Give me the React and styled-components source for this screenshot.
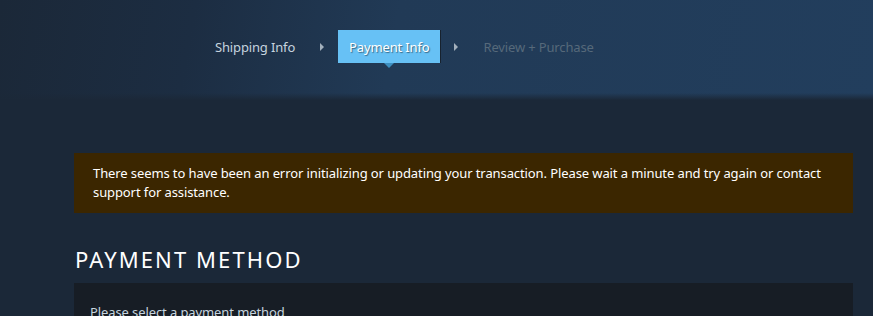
import React from "react";
import styled, { createGlobalStyle } from "styled-components";

const GlobalStyle = createGlobalStyle`
  html, body {
    margin: 0;
    padding: 0;
    background: #1b2838;
    font-family: "Noto Sans", "Open Sans", Arial, sans-serif;
    overflow: hidden;
  }
`;

const steps = [
  { label: "Shipping Info", state: "done" },
  { label: "Payment Info", state: "active" },
  { label: "Review + Purchase", state: "todo" },
];

export default function App() {
  return (
    <>
      <GlobalStyle />
      <Page>
        <Header>
          <StepBar>
            {steps.map((step, i) => (
              <React.Fragment key={step.label}>
                {i > 0 && <StepArrow />}
                <Step $state={step.state}>{step.label}</Step>
              </React.Fragment>
            ))}
          </StepBar>
        </Header>
        <Content>
          <ErrorBox>
            There seems to have been an error initializing or updating your
            transaction. Please wait a minute and try again or contact support
            for assistance.
          </ErrorBox>
          <SectionTitle>Payment Method</SectionTitle>
          <Panel>
            <PanelText>Please select a payment method</PanelText>
          </Panel>
        </Content>
      </Page>
    </>
  );
}

const Page = styled.div`
  width: 873px;
  height: 316px;
  background: #1b2838;
  overflow: hidden;
`;

const Header = styled.div`
  height: 100px;
  background:
    linear-gradient(to bottom, rgba(27, 40, 56, 0) 93%, #1b2838 100%),
    linear-gradient(100deg, #1b2838 0%, #1c2d42 22%, #213a56 45%, #223e5d 100%);
  padding-top: 30px;
  box-sizing: border-box;
`;

const StepBar = styled.div`
  display: flex;
  align-items: center;
  height: 33px;
  padding-left: 215px;
`;

const StepArrow = styled.span`
  width: 0;
  height: 0;
  margin: 0 25px;
  border-top: 4px solid transparent;
  border-bottom: 4px solid transparent;
  border-left: 4px solid #a3b0bc;
`;

const Step = styled.div`
  position: relative;
  display: flex;
  align-items: center;
  height: 33px;
  font-size: 13px;
  letter-spacing: -0.15px;
  color: ${(p) =>
    p.$state === "active" ? "#ffffff" : p.$state === "done" ? "#c6d4df" : "#56697a"};
  ${(p) =>
    p.$state === "active" &&
    `
    padding: 0 11px;
    margin: 0 -11px;
    background: #67c1f5;
    box-shadow: 1px 0 0 #17222e;
    text-shadow: 1px 1px 1px rgba(0, 0, 0, 0.45);
    &::after {
      content: "";
      position: absolute;
      left: 50%;
      bottom: -5px;
      margin-left: -5px;
      border-left: 5px solid transparent;
      border-right: 5px solid transparent;
      border-top: 5px solid #3d8fc0;
    }
  `}
`;

const Content = styled.div`
  padding: 53px 20px 0 74px;
`;

const ErrorBox = styled.div`
  background: #3b2600;
  color: #ffffff;
  font-size: 13px;
  letter-spacing: -0.1px;
  line-height: 19px;
  padding: 11px 19px 11px 19px;
`;

const SectionTitle = styled.h2`
  margin: 31px 0 9px 1px;
  font-size: 22px;
  font-weight: 400;
  letter-spacing: 2.1px;
  text-transform: uppercase;
  color: #ffffff;
  line-height: 30px;
`;

const Panel = styled.div`
  background: #171d25;
  padding: 20px 16px;
  min-height: 60px;
`;

const PanelText = styled.div`
  font-size: 13px;
  letter-spacing: -0.1px;
  color: #c6d4df;
`;
